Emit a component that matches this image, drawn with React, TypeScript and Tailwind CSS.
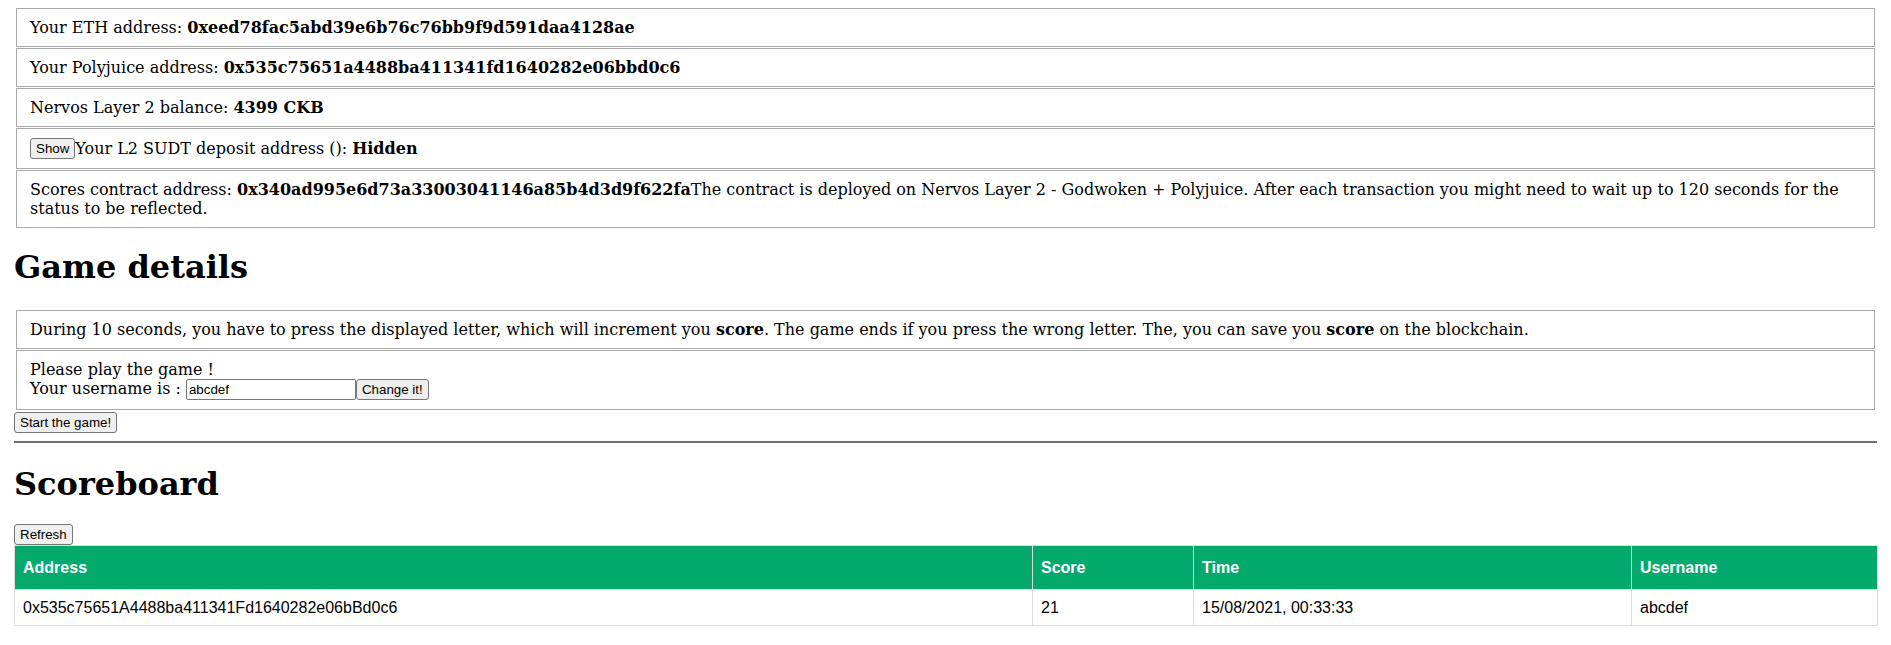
import type { ReactNode } from 'react';

const btn =
  "inline-flex h-[21px] items-center rounded-[3px] border border-[#767676] bg-[#efefef] px-[5px] align-baseline font-['Liberation_Sans',Arial,sans-serif] text-[13.33px] leading-none text-black";

function Box({ children, className }: { children: ReactNode; className?: string }) {
  return (
    <div className={`border border-[#a9a9a9] pl-[13px] pr-[14px] py-[9px] leading-[19px] ${className ?? ''}`}>
      {children}
    </div>
  );
}

type Score = { address: string; score: number; time: string; username: string };

const scores: Score[] = [
  {
    address: '0x535c75651A4488ba411341Fd1640282e06bBd0c6',
    score: 21,
    time: '15/08/2021, 00:33:33',
    username: 'abcdef'
  }
];

export default function App() {
  return (
    <div className="min-h-screen bg-white px-[14px] pt-[8px] pb-4 font-['DejaVu_Serif',serif] text-[16px] text-black">
      <div className="mx-[2px] flex flex-col gap-px">
        <Box>
          Your ETH address: <b>0xeed78fac5abd39e6b76c76bb9f9d591daa4128ae</b>
        </Box>
        <Box>
          Your Polyjuice address: <b>0x535c75651a4488ba411341fd1640282e06bbd0c6</b>
        </Box>
        <Box>
          Nervos Layer 2 balance: <b>4399 CKB</b>
        </Box>
        <Box className="flex items-center">
          <button className={btn}>Show</button>
          <span className="whitespace-pre">
            Your L2 SUDT deposit address (): <b>Hidden</b>
          </span>
        </Box>
        <Box>
          Scores contract address: <b>0x340ad995e6d73a33003041146a85b4d3d9f622fa</b>The contract is deployed on Nervos
          Layer 2 - Godwoken + Polyjuice. After each transaction you might need to wait up to 120 seconds for the status
          to be reflected.
        </Box>
      </div>

      <h1 className="mt-[21px] mb-[24px] text-[32px] leading-[37px] font-bold">Game details</h1>

      <div className="mx-[2px] flex flex-col gap-px">
        <Box>
          During 10 seconds, you have to press the displayed letter, which will increment you <b>score</b>. The game ends
          if you press the wrong letter. The, you can save you <b>score</b> on the blockchain.
        </Box>
        <Box>
          Please play the game !
          <br />
          Your username is :{' '}
          <input
            defaultValue="abcdef"
            className="inline-block h-[21px] w-[170px] rounded-[2px] border border-[#767676] bg-white px-[2px] align-baseline font-['Liberation_Sans',Arial,sans-serif] text-[13.33px] text-black"
          />
          <button className={btn}>Change it!</button>
        </Box>
      </div>

      <div className="mt-[2px] flex">
        <button className={btn}>Start the game!</button>
      </div>

      <hr className="mt-[8px] border-t-2 border-[#6f6f6f]" />

      <h1 className="mt-[23px] mb-[21px] text-[32px] leading-[37px] font-bold">Scoreboard</h1>

      <div className="flex">
        <button className={btn}>Refresh</button>
      </div>

      <table className="w-full table-fixed border-collapse font-['Liberation_Sans',Arial,sans-serif] text-[16px] leading-[19px]">
        <thead>
          <tr>
            <th className="w-[1018px] border border-[#ddd] bg-[#04AA6D] px-2 py-3 text-left font-bold text-white">
              Address
            </th>
            <th className="w-[161px] border border-[#ddd] bg-[#04AA6D] px-2 py-3 text-left font-bold text-white">
              Score
            </th>
            <th className="w-[438px] border border-[#ddd] bg-[#04AA6D] px-2 py-3 text-left font-bold text-white">
              Time
            </th>
            <th className="w-[246px] border border-[#ddd] bg-[#04AA6D] px-2 py-3 text-left font-bold text-white">
              Username
            </th>
          </tr>
        </thead>
        <tbody>
          {scores.map((s) => (
            <tr key={s.address + s.time}>
              <td className="border border-[#ddd] p-2">{s.address}</td>
              <td className="border border-[#ddd] p-2">{s.score}</td>
              <td className="border border-[#ddd] p-2">{s.time}</td>
              <td className="border border-[#ddd] p-2">{s.username}</td>
            </tr>
          ))}
        </tbody>
      </table>
    </div>
  );
}
